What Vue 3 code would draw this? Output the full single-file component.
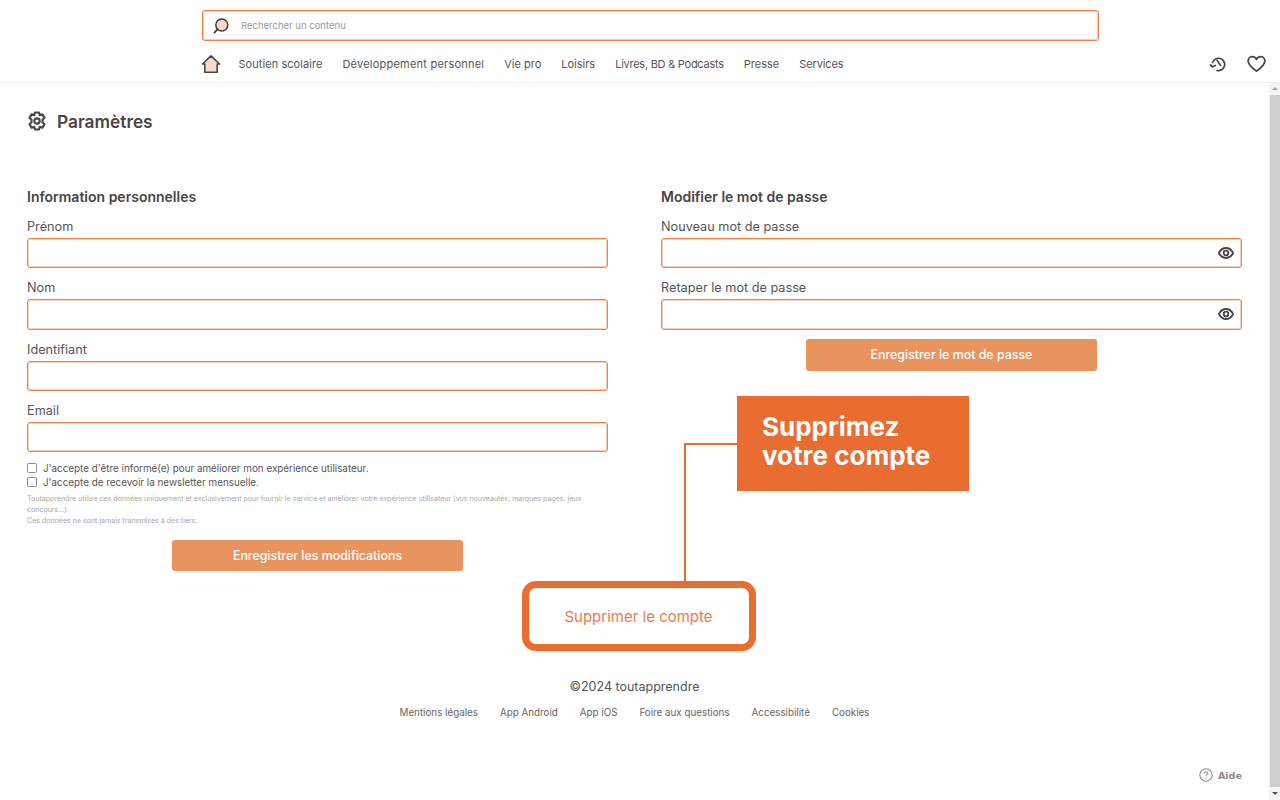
<template>
  <div class="shell">
    <div class="page">
      <header class="top">
        <div class="search">
          <svg class="searchIcon" width="18" height="18" viewBox="0 0 18 18">
            <circle cx="9.8" cy="8" r="6" fill="#fbd9c8" stroke="#3f3b3a" stroke-width="1.5" />
            <path d="M5.6 12.4 2.4 15.6" stroke="#3f3b3a" stroke-width="1.8" stroke-linecap="round" />
          </svg>
          <span>Rechercher un contenu</span>
        </div>
        <nav class="nav">
          <svg class="home" width="20" height="20" viewBox="0 0 20 20">
            <path d="M1.5 10 10 1.8 18.500 10H16.200V18.200H3.800V10Z" fill="#fbd9c8" stroke="#4a4443" stroke-width="1.6" stroke-linejoin="round" />
          </svg>
          <a v-for="item in navItems" :key="item">{{ item }}</a>
        </nav>
        <div class="topIcons">
          <svg width="18" height="18" viewBox="0 0 18 18" fill="none" stroke="#4a4443" stroke-width="1.7" stroke-linecap="round" stroke-linejoin="round">
            <path d="M3.600 7.500A6.200 6.200 0 1 1 8 15.500" />
            <path d="M1.400 9.800 3.400 11.800 6.400 10.400" />
            <path d="M8.200 5.400 11.600 10.400" />
          </svg>
          <svg width="19" height="18" viewBox="0 0 20 18" fill="none" stroke="#4a4443" stroke-width="1.9" stroke-linejoin="round">
            <path d="M10 16.500C4.500 12.500 1.200 9.500 1.200 5.800 1.200 3 3.300 1.200 5.600 1.200 7.400 1.200 9 2.200 10 4 11 2.200 12.600 1.200 14.400 1.200 16.700 1.200 18.800 3 18.800 5.800 18.800 9.500 15.500 12.500 10 16.500Z" />
          </svg>
        </div>
      </header>

      <main class="main">
        <h1 class="title">
          <svg width="20" height="20" viewBox="0 0 24 24" fill="none" stroke="#4a4443" stroke-width="2.600" stroke-linejoin="round">
            <path d="M9.600 1.800H14.400L15.300 5 18.500 4 21 8.200 18.600 10.500V13.500L21 15.800 18.500 20 15.300 19 14.400 22.200H9.600L8.700 19 5.500 20 3 15.800 5.400 13.500V10.500L3 8.200 5.500 4 8.700 5Z" />
            <circle cx="12" cy="12" r="3.200" />
          </svg>
          Paramètres
        </h1>

        <div class="columns">
          <section class="col">
            <h2>Information personnelles</h2>
            <div class="field" v-for="f in infoFields" :key="f">
              <label>{{ f }}</label>
              <div class="input"></div>
            </div>
            <div class="checks">
              <div class="check"><i></i>J'accepte d'être informé(e) pour améliorer mon expérience utilisateur.</div>
              <div class="check"><i></i>J'accepte de recevoir la newsletter mensuelle.</div>
            </div>
            <p class="legal">
              Toutapprendre utilise ces données uniquement et exclusivement pour fournir le service et améliorer votre expérience utilisateur (vos nouveautés, marques pages, jeux concours...).<br />
              Ces données ne sont jamais transmises à des tiers.
            </p>
            <button class="save saveInfo">Enregistrer les modifications</button>
          </section>

          <section class="col">
            <h2>Modifier le mot de passe</h2>
            <div class="field" v-for="f in passFields" :key="f">
              <label>{{ f }}</label>
              <div class="input">
                <svg width="16" height="12" viewBox="0 0 16 12" fill="none" stroke="#4a4443" stroke-width="1.800">
                  <path d="M0.900 6C2.500 2.800 5 1 8 1S13.500 2.800 15.100 6C13.500 9.200 11 11 8 11S2.500 9.200 0.900 6Z" />
                  <circle cx="8" cy="6" r="2.300" />
                </svg>
              </div>
            </div>
            <button class="save savePass">Enregistrer le mot de passe</button>
          </section>
        </div>

        <div class="deleteWrap">
          <button class="delete">Supprimer le compte</button>
        </div>

        <footer class="footer">
          <div class="copy">©2024 toutapprendre</div>
          <div class="links">
            <a v-for="l in footerLinks" :key="l">{{ l }}</a>
          </div>
        </footer>
      </main>

      <div class="callout">Supprimez<br />votre compte</div>
      <div class="lineH"></div>
      <div class="lineV"></div>

      <div class="help">
        <svg width="14" height="14" viewBox="0 0 14 14" fill="none" stroke="#8a8a8a" stroke-width="1.100">
          <circle cx="7" cy="7" r="6.200" />
          <path d="M5.200 5.400C5.300 4.300 6 3.700 7 3.700S8.800 4.300 8.800 5.200C8.800 6.400 7 6.400 7 8" />
          <path d="M7 9.500V10.500" />
        </svg>
        Aide
      </div>
    </div>

    <div class="scrollbar">
      <span class="arrowUp"></span>
      <div class="thumb"></div>
      <span class="arrowDown"></span>
    </div>
  </div>
</template>

<script setup>
const navItems = ['Soutien scolaire', 'Développement personnel', 'Vie pro', 'Loisirs', 'Livres, BD & Podcasts', 'Presse', 'Services']
const infoFields = ['Prénom', 'Nom', 'Identifiant', 'Email']
const passFields = ['Nouveau mot de passe', 'Retaper le mot de passe']
const footerLinks = ['Mentions légales', 'App Android', 'App iOS', 'Foire aux questions', 'Accessibilité', 'Cookies']
</script>

<style>
html, body { margin: 0; background: #fff; overflow: hidden; }
</style>

<style scoped>
.shell {
  width: 1280px;
  height: 800px;
  position: relative;
  overflow: hidden;
  font-family: Inter, "Liberation Sans", sans-serif;
  color: #4a4443;
}
.page {
  width: 100%;
  height: 100%;
}
.top {
  height: 83px;
  box-sizing: border-box;
  border-bottom: 1px solid #f0f0f0;
  padding: 10px 0 0 201px;
  position: relative;
}
.search {
  width: 897px;
  height: 31px;
  margin-left: 1px;
  box-sizing: border-box;
  border: 1px solid #ef8145;
  box-shadow: inset 0 0 0 1px #f9c9ae;
  border-radius: 3px;
  display: flex;
  align-items: center;
  padding-left: 9px;
  gap: 11px;
  font-size: 9.500px;
  color: #999;
}
.nav {
  display: flex;
  align-items: center;
  height: 20px;
  margin-top: 13px;
  gap: 20px;
  font-size: 11px;
  color: #555;
}
.home { margin-right: -2.500px; }
.nav a:nth-of-type(1) { letter-spacing: 0.060px; }
.nav a:nth-of-type(2) { letter-spacing: 0.220px; }
.nav a:nth-of-type(5) { letter-spacing: -0.250px; }
.nav a:nth-of-type(7) { letter-spacing: -0.100px; }
.topIcons {
  position: absolute;
  right: 14px;
  top: 55px;
  display: flex;
  align-items: center;
  gap: 20px;
}
.main {
  padding: 0 38px 0 27px;
}
.title {
  margin: 27px 0 0;
  height: 22px;
  display: flex;
  align-items: center;
  gap: 10px;
  font-size: 17.300px;
  font-weight: 600;
  color: #4a4443;
}
.columns {
  display: grid;
  grid-template-columns: 581px 581px;
  gap: 53px;
  margin-top: 55px;
}
.col h2 {
  margin: 0 0 11px;
  height: 20px;
  line-height: 20px;
  font-size: 14px;
  font-weight: 600;
  color: #4a4443;
}
.field { margin-bottom: 11px; }
.field label {
  display: block;
  height: 20px;
  line-height: 18px;
  font-size: 12.700px;
  color: #555;
}
.input {
  height: 30.300px;
  box-sizing: border-box;
  border: 1px solid #ee8244;
  box-shadow: inset 0 0 0 1px #f9cfb6;
  border-radius: 3px;
  display: flex;
  align-items: center;
  justify-content: flex-end;
  padding-right: 7px;
}
.checks { margin-top: -2px; }
.check {
  display: flex;
  align-items: center;
  height: 14px;
  font-size: 9.850px;
  color: #555;
}
.check i {
  width: 8px;
  height: 8px;
  border: 1px solid #8a8a8a;
  border-radius: 1.500px;
  margin-right: 6px;
}
.legal {
  margin: 4px 0 0;
  font-size: 7.050px;
  line-height: 11px;
  color: #a8a8a8;
}
.save {
  display: block;
  width: 291px;
  height: 31px;
  border: 0;
  border-radius: 3px;
  background: #e9945f;
  color: #fff;
  font-family: inherit;
  font-size: 12.400px;
  font-weight: 500;
}
.saveInfo { margin: 14px 0 0 145px; }
.savePass { height: 32px; margin: -2px 0 0 145px; }
.deleteWrap {
  display: flex;
  justify-content: center;
  margin: 10px 0 0 8px;
}
.delete {
  width: 234px;
  height: 70px;
  box-sizing: border-box;
  border: 7px solid #e96c30;
  border-radius: 14px;
  background: #fff;
  color: #ea7a48;
  font-family: inherit;
  font-size: 15px;
}
.footer {
  margin-top: 27px;
  text-align: center;
}
.copy {
  font-size: 12.500px;
  line-height: 18px;
  color: #555;
}
.links {
  display: flex;
  justify-content: center;
  gap: 22px;
  margin-top: 10px;
  font-size: 9.800px;
  line-height: 14px;
  color: #666;
}
.callout {
  position: absolute;
  left: 737px;
  top: 396px;
  width: 232px;
  height: 95px;
  box-sizing: border-box;
  padding: 16px 0 0 25px;
  background: #e96c30;
  color: #fff;
  font-size: 26px;
  font-weight: 700;
  line-height: 29px;
}
.lineH {
  position: absolute;
  left: 684px;
  top: 443px;
  width: 53px;
  height: 2px;
  background: #e96c30;
}
.lineV {
  position: absolute;
  left: 684px;
  top: 443px;
  width: 2px;
  height: 139px;
  background: #e96c30;
}
.help {
  position: absolute;
  left: 1199px;
  top: 768px;
  display: flex;
  align-items: center;
  gap: 5px;
  font-family: "DejaVu Sans", sans-serif;
  font-size: 9.500px;
  font-weight: 700;
  color: #8a8a8a;
}
.scrollbar {
  position: absolute;
  right: 0;
  top: 83px;
  bottom: 0;
  width: 11px;
  background: #f4f4f4;
}
.thumb {
  position: absolute;
  left: 1px;
  right: 0;
  top: 12px;
  bottom: 13px;
  background: #cdcdcd;
}
.arrowUp, .arrowDown {
  position: absolute;
  left: 3px;
  width: 0;
  height: 0;
  border-left: 3px solid transparent;
  border-right: 3px solid transparent;
}
.arrowUp { top: 4px; border-bottom: 3px solid #a3a3a3; }
.arrowDown { bottom: 5px; border-top: 3px solid #505050; }
</style>
